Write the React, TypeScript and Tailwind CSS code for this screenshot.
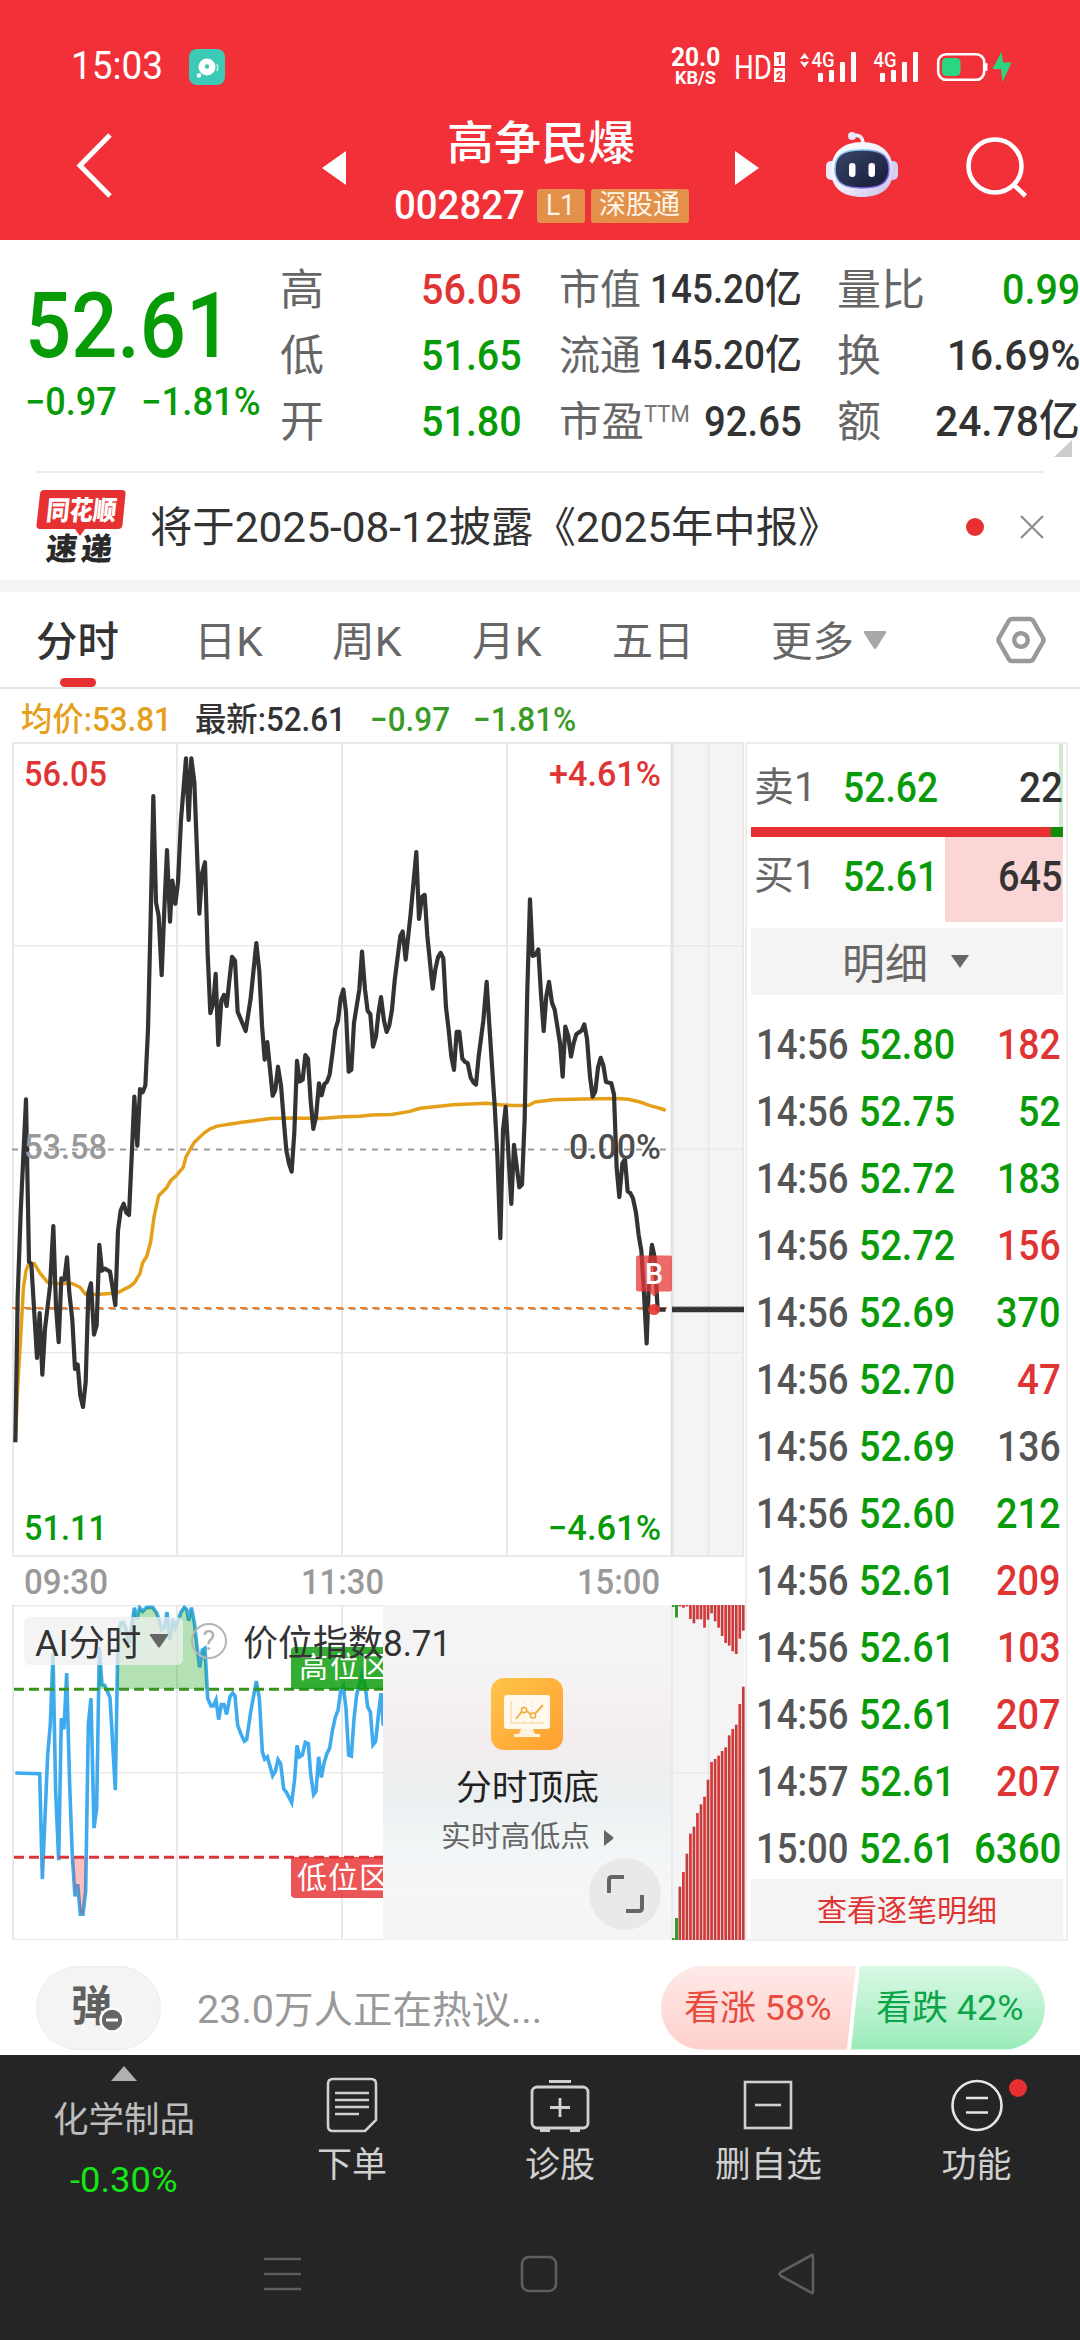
import { useLayoutEffect, useRef, useState, type ReactNode } from "react";

/* Text squeezed or stretched horizontally to fill the width given by its class. */
function Fit({ className = "", children }: { className?: string; children: ReactNode }) {
  const box = useRef<HTMLSpanElement>(null);
  const inner = useRef<HTMLSpanElement>(null);
  const [scale, setScale] = useState(1);
  useLayoutEffect(() => {
    if (box.current && inner.current) {
      setScale(box.current.clientWidth / inner.current.offsetWidth);
    }
  }, []);
  return (
    <span ref={box} className={`block shrink-0 leading-none ${className}`}>
      <span
        ref={inner}
        className="inline-block origin-left whitespace-nowrap align-top"
        style={{ transform: `scaleX(${scale})` }}
      >
        {children}
      </span>
    </span>
  );
}

const GREEN = "#079b07";
const RED = "#e03434";

const PRICE =
  "46,1574 53,1250 62,1060 78,806 87,1170 94,1175 111,1385 119,1285 127,1423 135,1320 150,1225 160,1090 168,1270 176,1350 184,1207 193,1210 201,1160 208,1240 217,1300 225,1410 233,1400 241,1470 249,1495 257,1440 265,1240 273,1218 282,1333 290,1312 298,1132 306,1190 314,1185 330,1192 346,1267 354,1100 362,1055 371,1040 379,1060 387,1065 396,920 403,800 412,910 420,783 428,790 436,775 444,650 452,400 460,127 468,365 476,395 485,528 493,380 501,248 510,408 517,316 526,368 534,320 543,180 558,42 566,180 574,42 583,95 591,250 598,390 606,300 615,275 623,480 631,613 640,590 647,525 655,684 664,585 672,572 680,597 688,540 696,487 705,495 713,610 737,653 752,580 769,456 778,520 786,640 794,717 802,678 818,798 826,785 834,733 843,775 851,850 859,920 867,950 875,968 883,880 891,720 899,766 908,762 916,707 924,715 932,810 940,872 948,845 957,770 965,797 973,772 981,767 989,750 997,705 1006,650 1014,630 1022,580 1030,560 1038,610 1046,744 1054,740 1062,635 1078,560 1086,475 1095,560 1103,608 1111,615 1119,688 1128,665 1135,615 1143,577 1152,630 1160,655 1168,640 1176,605 1184,540 1201,440 1208,430 1217,493 1232,390 1249,252 1257,402 1266,352 1274,348 1282,440 1298,558 1306,515 1314,488 1322,478 1330,490 1338,600 1346,650 1354,710 1362,740 1370,655 1378,655 1387,715 1395,722 1403,725 1412,757 1420,768 1428,773 1436,710 1450,630 1460,543 1468,640 1484,820 1492,930 1501,1117 1509,875 1517,823 1534,1040 1542,908 1558,1003 1566,997 1574,850 1582,560 1590,358 1598,485 1607,482 1615,470 1623,570 1631,653 1639,575 1647,543 1656,590 1664,605 1680,680 1688,755 1696,643 1705,665 1713,710 1721,680 1729,660 1745,652 1753,638 1761,670 1770,755 1778,800 1786,788 1794,735 1802,713 1810,730 1818,767 1834,770 1842,795 1850,960 1858,1025 1867,950 1875,940 1883,1012 1891,1016 1899,1028 1908,1060 1916,1110 1924,1145 1932,1240 1940,1353 1948,1190 1956,1132 1964,1160 1973,1277 1997,1277";

const AVERAGE =
  "46,1574 53,1450 62,1340 70,1230 78,1190 86,1174 103,1174 119,1194 143,1216 176,1219 214,1218 240,1227 257,1243 290,1243 350,1240 390,1225 404,1216 420,1196 428,1172 440,1158 452,1125 462,1070 476,1022 500,1004 512,988 530,976 550,958 558,935 583,902 610,883 630,872 652,866 720,858 810,849 875,848 960,849 1030,845 1080,844 1115,841 1175,840 1230,833 1260,826 1360,818 1460,815 1500,818 1540,820 1585,820 1605,812 1660,807 1750,805 1850,804 1885,806 1920,812 1950,820 1980,826 1997,831";

const POSITION =
  "46,1027 119,1029 127,1335 143,975 151,885 159,680 167,1080 176,1280 184,868 192,900 200,737 209,1060 217,1270 225,1385 233,1350 241,1437 249,1437 257,1370 265,885 273,810 282,1187 290,1130 298,662 306,770 314,772 330,808 346,1077 354,620 362,590 371,590 379,610 387,650 403,547 411,580 419,547 428,558 440,546 458,546 470,562 480,590 485,610 493,605 501,560 510,640 518,580 526,605 543,560 553,546 560,552 566,585 574,547 583,590 591,660 599,720 607,670 615,665 623,810 633,832 640,832 648,815 656,872 664,828 672,828 680,857 690,805 698,795 705,803 713,888 722,912 733,935 740,930 752,850 769,760 778,810 787,965 794,987 802,980 818,1035 826,1022 834,988 842,1000 851,1073 859,1083 875,1113 884,1045 891,947 899,980 907,975 916,938 925,942 932,1030 941,1090 948,1080 956,980 964,1040 973,995 981,970 989,955 997,905 1006,865 1014,845 1022,790 1030,775 1038,840 1046,975 1054,978 1062,870 1070,800 1086,740 1095,770 1103,835 1111,850 1119,945 1127,935 1135,860 1143,795 1150,890";

const BOTTOM_BARS = [160, 204, 259, 319, 340, 381, 407, 430, 481, 534, 543, 553, 567, 578, 614, 633, 646, 708, 760];
const TOP_BARS = [4, 8, 4, 42, 55, 43, 43, 68, 44, 25, 49, 68, 93, 114, 122, 139, 147, 101, 77];

function ChartText({ x, y, w, fill, children, size = 35, weight = 500 }: {
  x: number; y: number; w: number; fill: string; children: string; size?: number; weight?: number;
}) {
  return (
    <text x={x} y={y + size * 0.355} fontSize={size} fontWeight={weight} fill={fill} textLength={w} lengthAdjust="spacingAndGlyphs">
      {children}
    </text>
  );
}

function StatusBar() {
  return (
    <div className="flex h-[116px] items-center pl-[71px] pr-[66px] pt-[17px] text-white">
      <Fit className="w-[92px] text-[39px]">15:03</Fit>
      <div className="ml-[26px] flex h-9 w-9 items-center justify-center rounded-lg bg-[#3ccab6]">
        <svg width="28" height="28" viewBox="0 0 28 28" fill="white">
          <circle cx="14" cy="14" r="8.5" />
          <circle cx="14" cy="13.5" r="2.2" fill="#3ccab6" />
          <circle cx="6" cy="22.500" r="2.2" />
          <path d="M24 11q1.500 3 0 7" stroke="#b9efe6" strokeWidth="1.500" fill="none" />
        </svg>
      </div>
      <div className="ml-auto flex flex-col items-center font-bold">
        <Fit className="w-[49px] text-[25px] leading-[21px]!">20.0</Fit>
        <Fit className="w-[41px] text-[19px]">KB/S</Fit>
      </div>
      <svg className="ml-[14px] overflow-visible" width="280" height="36" viewBox="733 48 280 36" fill="white">
        <text x="733" y="78" fontSize="34" fontWeight="400" textLength="38" lengthAdjust="spacingAndGlyphs">HD</text>
        <rect x="773" y="51" width="11" height="14" />
        <rect x="773" y="67" width="11" height="14" />
        <text x="778.500" y="62.500" fontSize="13" fontWeight="700" fill="#f13038" textAnchor="middle">1</text>
        <text x="778.500" y="78.500" fontSize="13" fontWeight="700" fill="#f13038" textAnchor="middle">2</text>
        <path d="M799 58l4.500-6 4.500 6zM799 60.500l4.500 6 4.500-6z" />
        <circle cx="803.500" cy="59.200" r="2.200" fill="#f13038" />
        <text x="810.500" y="66" fontSize="21" fontWeight="500" textLength="23" lengthAdjust="spacingAndGlyphs">4G</text>
        <text x="872.500" y="66" fontSize="21" fontWeight="500" textLength="23" lengthAdjust="spacingAndGlyphs">4G</text>
        {[0, 62].map((dx) => (
          <g key={dx}>
            <rect x={817 + dx} y="72" width="5" height="9" rx="1" />
            <rect x={828 + dx} y="69" width="5" height="12" rx="1" />
            <rect x={839 + dx} y="61" width="5" height="20" rx="1" />
            <rect x={850 + dx} y="51" width="5" height="30" rx="1" />
          </g>
        ))}
        <rect x="937.200" y="53.200" width="46" height="25.600" rx="8" fill="none" stroke="white" strokeWidth="2.600" />
        <rect x="984" y="62" width="2.500" height="8" rx="1" />
        <rect x="941" y="57" width="18.500" height="18" rx="4.500" fill="#2bd680" />
        <path d="M1000.500 51L991.500 68h8.500l1.500 13 9-19.500h-8.500z" fill="#2bd680" />
      </svg>
    </div>
  );
}

function Robot() {
  return (
    <svg width="74" height="68" viewBox="0 0 74 68">
      <defs>
        <linearGradient id="shell" x1="0" y1="0" x2="1" y2="1">
          <stop offset="0" stopColor="#ffffff" />
          <stop offset=".5" stopColor="#f1effa" />
          <stop offset="1" stopColor="#c3bce8" />
        </linearGradient>
        <linearGradient id="rim" x1="0" y1="0" x2="1" y2="1">
          <stop offset="0" stopColor="#7de0f0" />
          <stop offset="1" stopColor="#7a40e0" />
        </linearGradient>
        <linearGradient id="visor" x1="0" y1="0" x2="1" y2="1">
          <stop offset="0" stopColor="#3a4568" />
          <stop offset="1" stopColor="#141b38" />
        </linearGradient>
      </defs>
      <path d="M28 5c6-2 10 1 10 8" stroke="#efeefa" strokeWidth="3.500" fill="none" />
      <circle cx="27" cy="5" r="4" fill="#e9e6f8" />
      <rect x="1" y="30" width="11" height="19" rx="5" fill="#eceaf8" />
      <rect x="62" y="30" width="11" height="19" rx="5" fill="#d5d0f2" />
      <path d="M37 11c20 0 31 11 31 29 0 17-12 26-31 26S6 57 6 40C6 22 17 11 37 11z" fill="url(#shell)" />
      <path d="M37 19c19 0 27 5 27 19s-9 19-27 19-27-5-27-19 8-19 27-19z" fill="url(#visor)" stroke="url(#rim)" strokeWidth="1.500" />
      <rect x="24" y="32" width="6.500" height="14" rx="3.200" fill="white" />
      <rect x="43.500" y="32" width="6.500" height="14" rx="3.200" fill="white" />
    </svg>
  );
}

function Header() {
  return (
    <div className="flex h-[124px] items-start pt-[1px] text-white">
      <svg className="ml-[74px] mt-[15px]" width="40" height="66" viewBox="0 0 40 66" fill="none" stroke="white" strokeWidth="5">
        <path d="M36 3L6 33.500 36 64" />
      </svg>
      <svg className="ml-[208px] mt-[33px]" width="24" height="36" viewBox="0 0 24 36" fill="white"><path d="M24 1v34L0 18z" /></svg>
      <div className="ml-[47px] flex w-[296px] flex-col items-center">
        <Fit className="mt-[3px] w-[188px] text-[46px] font-medium">高争民爆</Fit>
        <div className="mt-[19px] flex items-center">
          <Fit className="w-[131px] text-[41px] font-medium">002827</Fit>
          <div className="ml-[12px] flex h-[34px] w-[48px] items-center justify-center rounded-[3px] bg-[#e3904b]">
            <Fit className="w-[29px] text-[29px] text-[#fff4e6]">L1</Fit>
          </div>
          <div className="ml-[6px] flex h-[34px] w-[98px] items-center justify-center rounded-[3px] bg-[#e3904b]">
            <Fit className="w-[81px] text-[27px] text-[#fff4e6]">深股通</Fit>
          </div>
        </div>
      </div>
      <svg className="ml-[46px] mt-[33px]" width="24" height="36" viewBox="0 0 24 36" fill="white"><path d="M0 1v34l24-17z" /></svg>
      <div className="ml-[66px] mt-[14px]"><Robot /></div>
      <svg className="ml-[67px] mt-[19px]" width="64" height="64" viewBox="0 0 64 64" fill="none" stroke="white" strokeWidth="4.600">
        <circle cx="29" cy="30" r="26.500" />
        <path d="M48.500 49.500l11 10.500" />
      </svg>
    </div>
  );
}

function Quote() {
  return (
    <div className="relative flex h-[231px]">
      <div className="w-[280px] pl-[25px] text-[#079b07]">
        <Fit className="mt-[41px] w-[207px] text-[91px] font-medium">52.61</Fit>
        <div className="mt-[11px] flex">
          <Fit className="w-[92px] text-[38px] font-medium">−0.97</Fit>
          <Fit className="ml-[24px] w-[120px] text-[38px] font-medium">−1.81%</Fit>
        </div>
      </div>
      <div className="mt-[16px] w-[242px] text-[#666]">
        {[["高", "56.05", "text-[#e03434]"], ["低", "51.65", "text-[#079b07]"], ["开", "51.80", "text-[#079b07]"]].map(([k, v, c]) => (
          <div key={k} className="flex h-[66px] items-center justify-between">
            <Fit className="mt-[3px] w-[44px] text-[43px]">{k}</Fit>
            <Fit className={`w-[101px] text-[43px] font-medium ${c}`}>{v}</Fit>
          </div>
        ))}
      </div>
      <div className="ml-[37px] mt-[16px] w-[243px] text-[#333]">
        {[["市值", "145.20亿"], ["流通", "145.20亿"]].map(([k, v]) => (
          <div key={k} className="flex h-[66px] items-center justify-between">
            <Fit className="mt-[3px] w-[82px] text-[41px] text-[#666]">{k}</Fit>
            <Fit className="w-[152px] text-[41px] font-medium">{v}</Fit>
          </div>
        ))}
        <div className="flex h-[66px] items-center">
          <Fit className="mt-[3px] w-[85px] text-[41px] text-[#666]">市盈</Fit>
          <Fit className="-mt-[14px] w-[46px] text-[24px] text-[#777]">TTM</Fit>
          <Fit className="ml-auto w-[98px] text-[43px] font-medium">92.65</Fit>
        </div>
      </div>
      <div className="ml-[35px] mt-[16px] w-[243px] text-[#333]">
        <div className="flex h-[66px] items-center justify-between">
          <Fit className="mt-[3px] w-[88px] text-[43px] text-[#666]">量比</Fit>
          <Fit className="w-[78px] text-[43px] font-medium text-[#079b07]">0.99</Fit>
        </div>
        <div className="flex h-[66px] items-center justify-between">
          <Fit className="mt-[3px] w-[44px] text-[43px] text-[#666]">换</Fit>
          <Fit className="w-[133px] text-[43px] font-medium">16.69%</Fit>
        </div>
        <div className="flex h-[66px] items-center justify-between">
          <Fit className="mt-[3px] w-[44px] text-[43px] text-[#666]">额</Fit>
          <Fit className="w-[145px] text-[43px] font-medium">24.78亿</Fit>
        </div>
      </div>
      <svg className="absolute right-[8px] top-[200px]" width="18" height="17" fill="#cdcdcd"><path d="M18 0v17H0z" /></svg>
    </div>
  );
}

function News() {
  return (
    <div className="mx-[36px] flex h-[109px] items-center border-t-2 border-[#ededed]">
      <svg className="mb-[4px] overflow-visible" width="90" height="76" viewBox="0 0 90 76">
        <path d="M8 3h78q4 0 3.500 4l-3 31q-.500 4-4.500 4H49l-5 7-5-7H4q-4 0-3.500-4L4 7q.500-4 4-4z" fill="#e73031" />
        <g transform="skewX(-6)" fontWeight="900" fontFamily="'Noto Sans CJK SC', sans-serif">
          <text x="13" y="33" fontSize="27" fill="white" textLength="70" lengthAdjust="spacingAndGlyphs">同花顺</text>
          <text x="17" y="73" fontSize="31" fill="#2a2a2a" textLength="66" lengthAdjust="spacing">速递</text>
        </g>
      </svg>
      <Fit className="ml-[24px] mt-[3px] w-[690px] text-[42px] text-[#333]">将于2025-08-12披露《2025年中报》</Fit>
      <div className="ml-auto h-[18px] w-[18px] rounded-full bg-[#e73031]" />
      <svg className="ml-[36px]" width="24" height="24" viewBox="0 0 24 24" stroke="#8e8e8e" strokeWidth="2.200"><path d="M1 1l22 22M23 1L1 23" /></svg>
    </div>
  );
}

function Tabs() {
  return (
    <div className="relative flex h-[97px] items-center border-b-2 border-[#e6e6e6] pl-[36px] text-[41px] text-[#666]">
      <Fit className="mt-[6px] w-[83px] font-medium text-[#333]">分时</Fit>
      <Fit className="ml-[75px] mt-[6px] w-[69px]">日K</Fit>
      <Fit className="ml-[69px] mt-[6px] w-[70px]">周K</Fit>
      <Fit className="ml-[70px] mt-[6px] w-[70px]">月K</Fit>
      <Fit className="ml-[70px] mt-[6px] w-[82px]">五日</Fit>
      <Fit className="ml-[77px] mt-[6px] w-[83px]">更多</Fit>
      <svg className="ml-[9px]" width="24" height="20" viewBox="0 0 24 20" fill="#a8a8a8"><path d="M2 1h20q2 0 1 2L13.500 18q-1.500 2-3 0L1 3Q0 1 2 1z" /></svg>
      <svg className="ml-[109px]" width="50" height="48" viewBox="0 0 50 48" fill="none" stroke="#999" strokeWidth="4.500" strokeLinejoin="round">
        <path d="M16 3h18q2 0 3 1.500L47 22q1 2 0 4L37 43.500Q36 45 34 45H16q-2 0-3-1.500L3 26q-1-2 0-4L13 4.500Q14 3 16 3z" />
        <circle cx="25" cy="24" r="6.800" />
      </svg>
      <div className="absolute bottom-0 left-[60px] h-[9px] w-[36px] rounded-[5px] bg-[#e73031]" />
    </div>
  );
}

function MainChart() {
  return (
    <svg className="block" width="745" height="863" viewBox="0 743 745 863">
      <rect x="671" y="743" width="73" height="814" fill="#f4f4f4" />
      <g fill="#e9e9e9">
        {[743, 946, 1353, 1556].map((y) => <rect key={y} x="12" y={y} width="732" height={y === 946 || y === 1353 ? 1.500 : 2} />)}
        <rect x="671" y="1149.500" width="73" height="1.500" />
        {[12, 176, 341, 506, 707.500, 742].map((x) => <rect key={x} x={x} y="743" width="2" height="814" />)}
        <rect x="670.500" y="743" width="3" height="814" fill="#e4e4e4" />
      </g>
      <path d="M12 1150.500H666" stroke="#9a9a9a" strokeWidth="2" strokeDasharray="6 6" />
      <path d="M12 1310H666" stroke="#b3ab9c" strokeWidth="2" strokeDasharray="6 6" strokeDashoffset="-2" />
      <path d="M12 1309H672" stroke="#ef8331" strokeWidth="2" strokeDasharray="7 5" />
      <g transform="translate(0 740.500) scale(.33333 .44643)" fill="none">
        <polyline points={AVERAGE} stroke="#e5a01b" strokeWidth="3.500" vectorEffect="non-scaling-stroke" strokeLinejoin="round" />
        <polyline points={PRICE} stroke="#333" strokeWidth="4.200" vectorEffect="non-scaling-stroke" strokeLinejoin="round" />
      </g>
      <path d="M672 1310.500H744" stroke="#333" strokeWidth="5.500" />
      <path d="M672 1308H744" stroke="#777" strokeWidth="1" strokeDasharray="2 2" />
      <g>
        <ChartText x={24} y={775} w={83} fill={RED}>56.05</ChartText>
        <ChartText x={549} y={775} w={112} fill={RED}>+4.61%</ChartText>
        <ChartText x={24} y={1148} w={83} fill="#999">53.58</ChartText>
        <ChartText x={569} y={1148} w={92} fill="#4d4d4d">0.00%</ChartText>
        <ChartText x={24} y={1529} w={83} fill={GREEN}>51.11</ChartText>
        <ChartText x={548} y={1529} w={113} fill={GREEN}>−4.61%</ChartText>
        <ChartText x={24} y={1583} w={84} fill="#999">09:30</ChartText>
        <ChartText x={301} y={1583} w={83} fill="#999">11:30</ChartText>
        <ChartText x={577} y={1583} w={83} fill="#999">15:00</ChartText>
      </g>
      <ellipse cx="654" cy="1310.500" rx="6" ry="5.500" fill="#e63434" opacity=".9" />
      <path d="M638 1256.500h32q2 0 2 2v32q0 2-2 2h-11l-5 5-5-5h-11q-2 0-2-2v-32q0-2 2-2z" fill="#e83535" opacity=".74" />
      <ChartText x={645} y={1274.500} w={18} fill="white" size={29}>B</ChartText>
    </svg>
  );
}

function SubChart() {
  return (
    <div className="relative h-[335px] w-[745px]">
      <svg className="block" width="745" height="335" viewBox="0 1606 745 335">
        <defs>
          <clipPath id="high"><rect x="0" y="542" width="1149" height="242" /></clipPath>
          <clipPath id="low"><rect x="0" y="1272" width="1149" height="240" /></clipPath>
          <clipPath id="left"><rect x="0" y="1606" width="383" height="335" /></clipPath>
        </defs>
        <rect x="671" y="1606" width="73" height="335" fill="#f4f4f4" />
        <g fill="#e9e9e9">
          {[1606, 1773, 1940].map((y) => <rect key={y} x="12" y={y} width="732" height="1.500" />)}
          {[12, 176, 341, 671, 707.500].map((x) => <rect key={x} x={x} y="1606" width="2" height="335" />)}
        </g>
        <g clipPath="url(#left)">
          <g transform="translate(0 1420.300) scale(.33333 .34439)">
            <polyline points={POSITION} fill="none" stroke="#3fabee" strokeWidth="3.600" vectorEffect="non-scaling-stroke" />
            <polygon points={`46,784 ${POSITION} 1150,784`} clipPath="url(#high)" fill="#079b07" opacity=".3" />
            <polygon points={`46,1272 ${POSITION} 1150,1272`} clipPath="url(#low)" fill="#e73031" opacity=".3" />
          </g>
          <path d="M14 1690.300H383" stroke="#39941f" strokeWidth="3" strokeDasharray="10 5" />
          <path d="M14 1858.300H383" stroke="#d8383c" strokeWidth="3" strokeDasharray="10 5" />
          <path d="M291 1690v-38q0-4 4-4h90v42z" fill="#079b07" opacity=".82" />
          <path d="M291 1858v37q0 4 4 4h90v-41z" fill="#e73031" opacity=".82" />
          <text x="299" y="1679" fontSize="29" fill="white" textLength="91">高位区</text>
          <text x="297" y="1889" fontSize="30" fill="white" textLength="92">低位区</text>
        </g>
        <rect x="672" y="1606" width="2.500" height="2" fill="#3a9a28" />
        <rect x="675" y="1606" width="3" height="12.500" fill="#3a9a28" />
        <rect x="672" y="1939" width="2.500" height="2" fill="#3a9a28" />
        <rect x="675" y="1919" width="3" height="22" fill="#3a9a28" />
        {BOTTOM_BARS.map((h, i) => (
          <rect key={i} x={678.500 + i * 3.525} y={1941 - h / 3} width="2.700" height={h / 3} fill={i % 2 ? "#dd3636" : "#bd4040"} />
        ))}
        {TOP_BARS.map((h, i) => (
          <rect key={i} x={678.500 + i * 3.525} y="1606" width="2.700" height={h / 3} fill={i % 2 ? "#dd3636" : "#bd4040"} />
        ))}
      </svg>
      <div className="absolute left-[383px] top-0 flex h-[335px] w-[288px] flex-col items-center bg-[linear-gradient(180deg,#f5f5f6_0%,#f5f2f4_25%,#f3ecee_42%,#eeeeef_50%,#ebf1f2_60%,#f2f6f7_72%,#f6f5f8_85%,#f5f4f7_100%)]">
        <svg className="mt-[73px]" width="72" height="72" viewBox="0 0 72 72">
          <defs>
            <linearGradient id="app" x1="0" y1="0" x2="1" y2="1">
              <stop offset="0" stopColor="#ffc54a" />
              <stop offset="1" stopColor="#ff9f30" />
            </linearGradient>
          </defs>
          <rect width="72" height="72" rx="13" fill="url(#app)" />
          <rect x="13" y="17" width="46" height="34" rx="3" fill="#fff9ee" />
          <path d="M30 51h12l2 5h5v3H23v-3h5z" fill="#fff3dd" />
          <path d="M20 23v22h33" fill="none" stroke="#fbdcae" strokeWidth="1.500" />
          <path d="M33 21v24M41 21v24" stroke="#fbdcae" strokeWidth="1" strokeDasharray="1.500 2" />
          <path d="M25 41l8-10 9 7 10-11" fill="none" stroke="#f2b04a" strokeWidth="2" />
          <circle cx="33" cy="32" r="2.600" fill="#fff" stroke="#f2a93a" strokeWidth="1.500" />
          <circle cx="42" cy="37.500" r="2.600" fill="#fff" stroke="#f2a93a" strokeWidth="1.500" />
        </svg>
        <Fit className="mt-[21px] w-[143px] text-[35px] text-[#222]">分时顶底</Fit>
        <div className="mt-[17px] flex items-center">
          <Fit className="w-[149px] text-[29px] text-[#666]">实时高低点</Fit>
          <svg className="ml-[13px]" width="11" height="16" viewBox="0 0 11 16" fill="#666"><path d="M1 0l9 7q1 1 0 2l-9 7z" /></svg>
        </div>
      </div>
      <div className="absolute left-[589px] top-[253px] flex h-[72px] w-[72px] items-center justify-center rounded-full bg-[#e9e9ea]">
        <svg width="38" height="38" viewBox="0 0 38 38" fill="none" stroke="#666" strokeWidth="4"><path d="M3 18V5q0-3 3-3h12M36 20v13q0 3-3 3H20" /></svg>
      </div>
      <div className="absolute left-[24px] top-[12px] flex h-[48px] items-center">
        <div className="flex h-[48px] w-[159px] items-center rounded-[6px] bg-[#f0f0f0]/75 pl-[11px]">
          <Fit className="mt-[6px] w-[106px] text-[36px] text-[#333]">AI分时</Fit>
          <svg className="ml-[8px]" width="20" height="14" viewBox="0 0 20 14" fill="#666"><path d="M2 0h16q2 0 1 1.500L11 13q-1 1-2 0L1 1.500Q0 0 2 0z" /></svg>
        </div>
        <div className="ml-[8px] flex h-9 w-9 items-center justify-center rounded-full border-2 border-[#b5b5b5] text-[27px] leading-none text-[#b0b0b0]">?</div>
        <Fit className="ml-[16px] mt-[5px] w-[208px] text-[36px] text-[#333]">价位指数8.71</Fit>
      </div>
    </div>
  );
}

const TRADES: [string, string, string, string][] = [
  ["14:56", "52.80", "182", "text-[#e03434] w-[64px]"],
  ["14:56", "52.75", "52", "text-[#079b07] w-[43px]"],
  ["14:56", "52.72", "183", "text-[#079b07] w-[64px]"],
  ["14:56", "52.72", "156", "text-[#e03434] w-[64px]"],
  ["14:56", "52.69", "370", "text-[#079b07] w-[65px]"],
  ["14:56", "52.70", "47", "text-[#e03434] w-[44px]"],
  ["14:56", "52.69", "136", "text-[#555] w-[64px]"],
  ["14:56", "52.60", "212", "text-[#079b07] w-[65px]"],
  ["14:56", "52.61", "209", "text-[#e03434] w-[65px]"],
  ["14:56", "52.61", "103", "text-[#e03434] w-[64px]"],
  ["14:56", "52.61", "207", "text-[#e03434] w-[65px]"],
  ["14:57", "52.61", "207", "text-[#e03434] w-[65px]"],
  ["15:00", "52.61", "6360", "text-[#079b07] w-[87px]"],
];

function OrderBook() {
  return (
    <div className="flex h-[1199px] w-[323px] flex-col border-2 border-[#ececec] bg-white pl-[4px] pr-[3px]">
      <div className="flex h-[83px] items-center border-r-4 border-[#cdebcd] pt-[4px]">
        <Fit className="ml-[3px] w-[62px] text-[40px] text-[#666]">卖1</Fit>
        <Fit className="ml-[27px] w-[95px] text-[42px] font-medium text-[#079b07]">52.62</Fit>
        <Fit className="-mr-[4px] ml-auto w-[44px] text-[42px] font-medium text-[#333]">22</Fit>
      </div>
      <div className="flex h-[10px]">
        <div className="grow bg-[#e73031]" />
        <div className="w-[12px] bg-[#128c0a]" />
      </div>
      <div className="flex h-[85px] bg-[linear-gradient(90deg,#fff_0_194px,#fbd6d6_194px)] pt-[19px]">
        <Fit className="ml-[3px] w-[62px] text-[40px] text-[#666]">买1</Fit>
        <Fit className="ml-[27px] w-[95px] text-[42px] font-medium text-[#079b07]">52.61</Fit>
        <Fit className="ml-auto w-[65px] text-[42px] font-medium text-[#333]">645</Fit>
      </div>
      <div className="mt-[6px] flex h-[67px] items-center bg-[#f4f4f4] pl-[91px]">
        <Fit className="mt-[7px] w-[86px] text-[42px] text-[#666]">明细</Fit>
        <svg className="ml-[23px]" width="18" height="13" fill="#666"><path d="M0 0h18L9 13z" /></svg>
      </div>
      <div className="pt-[16px]">
        {TRADES.map(([t, p, v, c], i) => (
          <div key={i} className="flex h-[67px] items-center pl-[5px] pr-[2px] text-[42px]">
            <Fit className="w-[93px] font-medium text-[#555]">{t}</Fit>
            <Fit className="ml-[10px] w-[96px] font-medium text-[#079b07]">{p}</Fit>
            <Fit className={`ml-auto font-medium ${c}`}>{v}</Fit>
          </div>
        ))}
      </div>
      <div className="mt-[-3px] flex h-[60px] shrink-0 items-center justify-center bg-[#f4f4f4]">
        <Fit className="mt-[3px] w-[180px] text-[30px] text-[#e03434]">查看逐笔明细</Fit>
      </div>
    </div>
  );
}

function Discussion() {
  return (
    <div className="flex h-[114px] items-center pl-[36px] pr-[35px] pt-[20px] pb-[1px]">
      <div className="relative mt-[1px] flex h-[84px] w-[125px] items-center rounded-full border border-[#ececec] bg-[#f4f4f4] pl-[34px]">
        <Fit className="mb-[2px] w-[41px] text-[42px] font-bold text-[#606060]">弹</Fit>
        <svg className="absolute left-[62px] top-[40px]" width="26" height="26" viewBox="0 0 26 26">
          <circle cx="13" cy="13" r="11.500" fill="#666" stroke="white" strokeWidth="2.500" />
          <path d="M7 13h12" stroke="white" strokeWidth="3" />
        </svg>
      </div>
      <Fit className="ml-[36px] mt-[5px] w-[345px] text-[38px] text-[#999]">23.0万人正在热议...</Fit>
      <div className="ml-auto flex text-[35px]">
        <div className="flex h-[84px] w-[195px] items-center rounded-l-full bg-gradient-to-b from-[#feeae8] to-[#fdd0cc] pl-[23px] [clip-path:polygon(0_0,100%_0,186px_100%,0_100%)]">
          <Fit className="mt-[2px] w-[148px] text-[#e94b3f]">看涨 58%</Fit>
        </div>
        <div className="-ml-[5px] flex h-[84px] w-[194px] items-center rounded-r-full bg-gradient-to-b from-[#d9f9e5] to-[#9aebba] pl-[25px] [clip-path:polygon(9px_0,100%_0,100%_100%,0_100%)]">
          <Fit className="mt-[2px] w-[148px] text-[#0ca54a]">看跌 42%</Fit>
        </div>
      </div>
    </div>
  );
}

function BottomNav() {
  return (
    <div className="flex h-[165px] text-[35px] text-[#d0d0d0]">
      <div className="flex w-[247px] flex-col items-center pt-[11px]">
        <svg width="26" height="15" fill="#b0b0b0"><path d="M13 0l13 15H0z" /></svg>
        <Fit className="mt-[22px] w-[142px] text-[#bdbdbd]">化学制品</Fit>
        <Fit className="mt-[25px] w-[108px] text-[#16e516]">-0.30%</Fit>
      </div>
      <div className="flex w-[210px] flex-col items-center pt-[22px]">
        <svg width="52" height="56" viewBox="0 0 52 56" fill="none" stroke="#d0d0d0" strokeWidth="2.600">
          <path d="M7 2h38q5 0 5 5v36L39 54H7q-5 0-5-5V7q0-5 5-5z" />
          <path d="M9 16h34M9 23h34M9 30h34M9 37h24" />
        </svg>
        <Fit className="mt-[15px] w-[70px]">下单</Fit>
      </div>
      <div className="flex w-[206px] flex-col items-center pt-[22px]">
        <svg width="60" height="56" viewBox="0 0 60 56" fill="none" stroke="#d0d0d0" strokeWidth="2.800">
          <rect x="2" y="10" width="56" height="41" rx="5" />
          <path d="M19 4.500h22M30 21v19M20 30.500h20M10 53.500h10M40 53.500h10" />
        </svg>
        <Fit className="mt-[15px] w-[70px]">诊股</Fit>
      </div>
      <div className="flex w-[210px] flex-col items-center pt-[22px]">
        <svg width="50" height="56" viewBox="0 0 50 56" fill="none" stroke="#d0d0d0" strokeWidth="2.600">
          <rect x="2" y="5" width="46" height="46" />
          <path d="M12 28h26" />
        </svg>
        <Fit className="mt-[15px] w-[107px]">删自选</Fit>
      </div>
      <div className="relative flex w-[207px] flex-col items-center pt-[22px]">
        <svg width="54" height="56" viewBox="0 0 54 56" fill="none" stroke="#e6e6e6" strokeWidth="2.600">
          <circle cx="27" cy="28.500" r="24.500" />
          <path d="M16 21h22M16 35.500h22" />
        </svg>
        <Fit className="mt-[15px] w-[70px]">功能</Fit>
        <div className="absolute left-[136px] top-[24px] h-[18px] w-[18px] rounded-full bg-[#e73031]" />
      </div>
    </div>
  );
}

export default function App() {
  return (
    <div className="flex h-[2340px] w-[1080px] flex-col overflow-hidden bg-white font-[Roboto,'Noto_Sans_CJK_SC',sans-serif]">
      <div className="h-[240px] shrink-0 bg-[#f13038]">
        <StatusBar />
        <Header />
      </div>
      <Quote />
      <News />
      <div className="h-[12px] shrink-0 bg-[#f4f4f4]" />
      <Tabs />
      <div className="flex h-[53px] items-center pl-[21px] pt-[7px] text-[33px] text-[#333]">
        <Fit className="w-[151px] font-medium text-[#e5a01b]">均价:53.81</Fit>
        <Fit className="ml-[23px] w-[151px] font-medium">最新:52.61</Fit>
        <Fit className="ml-[24px] w-[80px] font-medium text-[#3a9a28]">−0.97</Fit>
        <Fit className="ml-[23px] w-[103px] font-medium text-[#3a9a28]">−1.81%</Fit>
      </div>
      <div className="flex h-[1199px] shrink-0">
        <div className="w-[745px]">
          <MainChart />
          <SubChart />
        </div>
        <OrderBook />
      </div>
      <Discussion />
      <div className="grow bg-[#252525]">
        <BottomNav />
        <div className="flex h-[108px] items-center justify-between pl-[264px] pr-[265px]">
          <svg width="37" height="34" stroke="#5e5e5e" strokeWidth="2.600"><path d="M0 2h37M0 17h37M0 32h37" /></svg>
          <svg width="38" height="38" fill="none" stroke="#5e5e5e" strokeWidth="2.600"><rect x="2" y="2" width="34" height="34" rx="7" /></svg>
          <svg width="38" height="42" viewBox="0 0 38 42" fill="none" stroke="#5e5e5e" strokeWidth="2.600" strokeLinejoin="round"><path d="M36 3v36q0 2-2 .5L4 23q-3-2 0-4L34 2.500q2-1.500 2 .5z" /></svg>
        </div>
      </div>
    </div>
  );
}
